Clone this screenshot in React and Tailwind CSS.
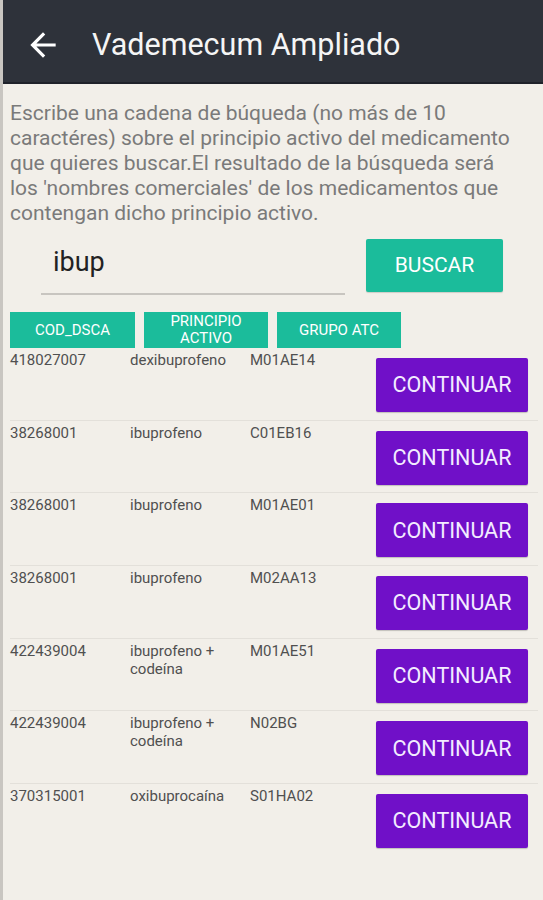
import React from "react";

const rows = [
  ["418027007", "dexibuprofeno", "M01AE14"],
  ["38268001", "ibuprofeno", "C01EB16"],
  ["38268001", "ibuprofeno", "M01AE01"],
  ["38268001", "ibuprofeno", "M02AA13"],
  ["422439004", "ibuprofeno + codeína", "M01AE51"],
  ["422439004", "ibuprofeno + codeína", "N02BG"],
  ["370315001", "oxibuprocaína", "S01HA02"],
];

export default function App() {
  return (
    <div className="min-h-[900px] bg-[#f2efe9] font-['Roboto',sans-serif] border-l-[3px] border-[#c9c6c1]">
      <header className="h-[84px] bg-[#2e323a] border-b-[2px] border-[#1f222a] flex items-start">
        <svg viewBox="0 0 24 24" className="w-[38px] h-[38px] ml-[21px] mt-[26px]" fill="#ffffff">
          <path d="M20 11H7.83l5.59-5.59L12 4l-8 8 8 8 1.41-1.41L7.83 13H20v-2z" />
        </svg>
        <h1 className="ml-[30px] mt-[27px] text-[30.5px] leading-[36px] text-[#f5f5f5] font-normal">
          Vademecum Ampliado
        </h1>
      </header>

      <p className="pl-[7px] pr-[4px] pt-[17px] text-[21px] leading-[25px] text-[#7a7a7a] whitespace-nowrap">
        Escribe una cadena de búqueda (no más de 10
        <br />
        caractéres) sobre el principio activo del medicamento
        <br />
        que quieres buscar.El resultado de la búsqueda será
        <br />
        los 'nombres comerciales' de los medicamentos que
        <br />
        contengan dicho principio activo.
      </p>

      <div className="flex items-start mt-[13px]">
        <div className="ml-[38px] w-[304px] h-[56px] border-b-[2px] border-[#c8c5c0] pl-[12px] pt-[7px] text-[27px] leading-[32px] text-[#222222]">
          ibup
        </div>
        <button className="ml-[21px] w-[137px] h-[53px] bg-[#1bbc9b] rounded-[2px] text-white text-[21px] leading-none shadow-[0_1px_1px_rgba(0,0,0,0.15)]">
          BUSCAR
        </button>
      </div>

      <div className="flex gap-[9px] pl-[7px] mt-[17px]">
        <div className="w-[125px] h-[36px] bg-[#1bbc9b] flex items-center justify-center text-white text-[15px] leading-[17px] text-center">
          COD_DSCA
        </div>
        <div className="w-[124px] h-[36px] bg-[#1bbc9b] flex items-center justify-center text-white text-[15px] leading-[17px] text-center">
          PRINCIPIO
          <br />
          ACTIVO
        </div>
        <div className="w-[124px] h-[36px] bg-[#1bbc9b] flex items-center justify-center text-white text-[15px] leading-[17px] text-center">
          GRUPO ATC
        </div>
      </div>

      <div className="ml-[7px] mr-[5px]">
        {rows.map((r, i) => (
          <div
            key={i}
            className={`flex items-start h-[72.67px] ${i < rows.length - 1 ? "border-b border-[#e3e0da]" : ""}`}
          >
            <div className="w-[120px] pt-[3px] text-[15px] leading-[18px] text-[#505050]">{r[0]}</div>
            <div className="w-[120px] pt-[3px] pr-[4px] text-[15px] leading-[18px] text-[#505050]">{r[1]}</div>
            <div className="w-[100px] pt-[3px] text-[15px] leading-[18px] text-[#505050]">{r[2]}</div>
            <button className="ml-auto mr-[10px] mt-[10px] w-[152px] h-[54px] bg-[#7010c8] rounded-[2px] text-[#f3ecff] text-[21.5px] leading-none shadow-[0_1px_1px_rgba(0,0,0,0.2)]">
              CONTINUAR
            </button>
          </div>
        ))}
      </div>
    </div>
  );
}
